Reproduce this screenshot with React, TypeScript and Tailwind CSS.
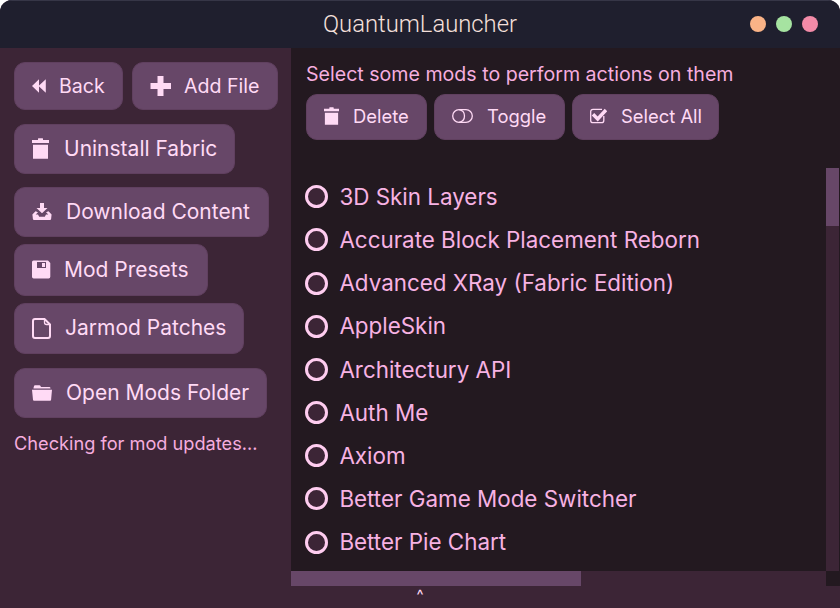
import type { ReactNode } from "react";

const mods = [
  "3D Skin Layers",
  "Accurate Block Placement Reborn",
  "Advanced XRay (Fabric Edition)",
  "AppleSkin",
  "Architectury API",
  "Auth Me",
  "Axiom",
  "Better Game Mode Switcher",
  "Better Pie Chart",
];

function BackIcon() {
  return (
    <svg width="14" height="14" viewBox="0 0 14 14" fill="currentColor">
      <path d="M0 7 7 .3v13.400zM6.500 7 13.800.3v13.400z" />
    </svg>
  );
}

function PlusIcon() {
  return (
    <svg width="21" height="20" viewBox="0 0 21 20" fill="currentColor">
      <path d="M7.5 0h6v7H21v6h-7.5v7h-6v-7H.5V7h7z" />
    </svg>
  );
}

function TrashIcon({ small = false }: { small?: boolean }) {
  return (
    <svg width={small ? 15 : 17} height={small ? 18 : 21} viewBox="0 0 17 21" preserveAspectRatio="none" fill="currentColor">
      <path d="M0 2h6V.8Q6 .3 6.5.3h4q.5 0 .5.5V2h6v3H0zM1 6.7h15v14H1z" />
    </svg>
  );
}

function DownloadIcon() {
  return (
    <svg width="20" height="17" viewBox="0 0 20 17" fill="currentColor">
      <path d="M8 0h4v5h3.5L10 10.2 4.5 5H8z" />
      <path d="M3.5 8.3 6 9.2 3.7 11.5H6l1.2 2.2h5.6l1.2-2.2h2.3L14 9.2l2.5-.9 3.1 3.2-.5 4.5q-.2 1-1.1 1H2q-.9 0-1.1-1L.4 11.5z" />
    </svg>
  );
}

function SaveIcon() {
  return (
    <svg width="19" height="19" viewBox="0 0 19 19" fill="currentColor">
      <path fillRule="evenodd" d="M1.5.5H16L18.3 3v13.8q0 1.7-1.7 1.7H1.7Q0 18.500 0 16.800V2Q0 .5 1.500.5zM5 2v6h9V2zM10 3h3v4h-3z" />
    </svg>
  );
}

function FileIcon() {
  return (
    <svg width="19" height="21" viewBox="0 0 19 21" fill="none" stroke="currentColor" strokeWidth="2">
      <path d="M3 1h9.500L18 6.500V18q0 2-2 2H3q-2 0-2-2V3q0-2 2-2z" />
      <path d="M12.500 1v3.500q0 2 2 2H18" strokeWidth="1.300" />
    </svg>
  );
}

function FolderIcon() {
  return (
    <svg width="20" height="16" viewBox="0 0 20 16" fill="currentColor">
      <path d="M1.500 3 2.100.800Q2.300.2 3 .2h4.500Q8.200.2 8.500 1L9 2h8.500q.7 0 .9.800l.1.700h-17zM0 4.800h20l-.9 10q-.1.900-1 .9H2q-.9 0-1-.9z" />
    </svg>
  );
}

function ToggleIcon() {
  return (
    <svg width="21" height="14" viewBox="0 0 21 14" fill="none" stroke="currentColor" strokeWidth="1.300">
      <rect x=".7" y=".7" width="19.600" height="12.600" rx="6.300" />
      <path d="M7 .7q5.500 1 5.500 6.300T7 13.300" />
    </svg>
  );
}

function CheckIcon() {
  return (
    <svg width="17" height="16" viewBox="0 0 17 16" fill="none" stroke="currentColor">
      <path d="M12 1.300H3Q.7 1.300.7 3.500v9q0 2.200 2.300 2.200h8.500q2.300 0 2.300-2.200V8" strokeWidth="1.300" />
      <path d="m3 6.200 4.700 4.800L16 2" strokeWidth="3.400" />
    </svg>
  );
}

function Button({ icon, label, className }: { icon: ReactNode; label: string; className: string }) {
  return (
    <button className={`flex shrink-0 items-center rounded-[11px] border border-[#60405f] bg-[#674768] pl-[17px] text-[#ffdaf5] ${className}`}>
      {icon}
      <span className="whitespace-nowrap">{label}</span>
    </button>
  );
}

export default function App() {
  return (
    <div className="h-[608px] w-[840px] overflow-hidden bg-white font-['Inter',sans-serif]">
      <div className="flex h-full flex-col overflow-hidden rounded-t-[12px] bg-[#3c2536]">
        <header className="grid h-12 shrink-0 grid-cols-[1fr_auto_1fr] items-center border-t border-[#363647] bg-[#1f1f2e]">
          <span />
          <h1 className="pb-[2px] font-['Roboto',sans-serif] text-[23.800px] leading-[44px] font-[350] text-[#f5e0dc]">QuantumLauncher</h1>
          <div className="flex justify-end gap-[10px] pr-[22px] pb-px">
            <span className="size-4 rounded-full bg-[#fab387]" />
            <span className="size-4 rounded-full bg-[#a6e3a1]" />
            <span className="size-4 rounded-full bg-[#f38ba8]" />
          </div>
        </header>

        <div className="flex h-[538px] shrink-0">
          <aside className="flex w-[291.400px] shrink-0 flex-col items-start pt-[14px] pl-[14px] text-[21px] leading-[26px]">
            <div className="flex gap-[9px] text-[19.600px]">
              <Button icon={<BackIcon />} label="Back" className="h-12 w-[109px] gap-[13px] pb-px" />
              <Button icon={<PlusIcon />} label="Add File" className="h-12 w-[146px] gap-[13px] pb-px" />
            </div>
            <Button icon={<TrashIcon />} label="Uninstall Fabric" className="mt-[14px] h-[50px] w-[221px] gap-[15px] pb-px" />
            <Button icon={<DownloadIcon />} label="Download Content" className="mt-[13px] h-[50px] w-[255px] gap-[14px] pb-px" />
            <Button icon={<SaveIcon />} label="Mod Presets" className="mt-[7px] h-[52px] w-[194px] gap-[13px] pb-px" />
            <Button icon={<FileIcon />} label="Jarmod Patches" className="mt-[7px] h-[51px] w-[230px] gap-[14px] pb-px" />
            <Button icon={<FolderIcon />} label="Open Mods Folder" className="mt-[14px] h-[50px] w-[253px] gap-[14px] pb-px" />
            <p className="mt-[12px] text-[18.200px] whitespace-nowrap text-[#f5addf]">Checking for mod updates...</p>
          </aside>

          <main className="flex min-w-0 flex-1 flex-col bg-[#231920]">
            <div className="flex h-[120px] shrink-0 flex-col pl-[14.600px]">
              <p className="mt-[13px] text-[19.600px] leading-[26px] text-[#f5addf]">Select some mods to perform actions on them</p>
              <div className="mt-[7px] flex gap-[7px] text-[18.400px] leading-[26px]">
                <Button icon={<TrashIcon small />} label="Delete" className="h-[46px] w-[121px] gap-[14px] pb-[2px]" />
                <Button icon={<ToggleIcon />} label="Toggle" className="h-[46px] w-[131px] gap-[14px] pb-[2px]" />
                <Button icon={<CheckIcon />} label="Select All" className="h-[46px] w-[147px] gap-[14px] pb-[2px]" />
              </div>
            </div>
            <div className="flex h-[403px] shrink-0">
              <ul className="flex flex-1 flex-col pt-[7.100px] pl-[14px] text-[22.400px] text-[#f7b2e3]">
                {mods.map((name) => (
                  <li key={name} className="flex h-[43.180px] shrink-0 items-center gap-[11px]">
                    <span className="size-[23px] shrink-0 rounded-full border-[3px] border-[#ffcdf0] bg-[#3c2536]" />
                    <span className="whitespace-nowrap">{name}</span>
                  </li>
                ))}
              </ul>
              <div className="mr-px w-[13px] bg-[#3c2536]">
                <div className="h-[58px] bg-[#674768]" />
              </div>
            </div>
            <div className="flex h-[15px] shrink-0">
              <div className="w-[534.600px] bg-[#3c2536]">
                <div className="h-full w-[289.600px] bg-[#674768]" />
              </div>
            </div>
          </main>
        </div>
        <footer className="flex h-[22px] items-start justify-center text-[15px] leading-[18px] text-[#ffdaf5]">^</footer>
      </div>
    </div>
  );
}
